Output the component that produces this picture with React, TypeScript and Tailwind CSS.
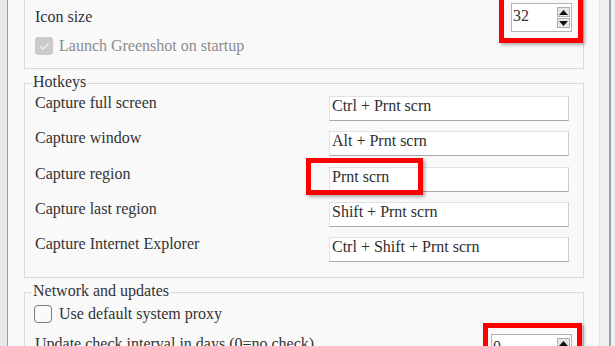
import React from "react";

function Arrow({ up }: { up?: boolean }) {
  return (
    <svg width="9" height="5" viewBox="0 0 9 5" className="block">
      {up ? <polygon points="0,5 9,5 4.5,0" fill="#111" /> : <polygon points="0,0 9,0 4.5,5" fill="#111" />}
    </svg>
  );
}

function Spinner({ value, width }: { value: string; width: string }) {
  return (
    <div className={`${width} h-[29px] bg-white border border-[#b4b4b4] flex justify-between pr-[1px]`}>
      <span className="pl-[1px] pt-[3px] leading-[18px] text-[#3a3228]">{value}</span>
      <div className="flex flex-col gap-px pt-[3px]">
        <div className="w-[13px] h-[10px] border border-[#adadad] bg-[#e6e6e6] flex items-center justify-center">
          <Arrow up />
        </div>
        <div className="w-[13px] h-[10px] border border-[#adadad] bg-[#e6e6e6] flex items-center justify-center">
          <Arrow />
        </div>
      </div>
    </div>
  );
}

function TextBox({ value, children }: { value: string; children?: React.ReactNode }) {
  return (
    <div className="relative w-[240px] h-[25px] bg-white border border-[#e2e2e2] border-b-[#a9a9a9] border-r-[#cfcfcf] pl-[2px] leading-[18px] text-[#2f2f2f]">
      {value}
      {children}
    </div>
  );
}

const hotkeys: [string, string, boolean][] = [
  ["Capture full screen", "Ctrl + Prnt scrn", false],
  ["Capture window", "Alt + Prnt scrn", false],
  ["Capture region", "Prnt scrn", true],
  ["Capture last region", "Shift + Prnt scrn", false],
  ["Capture Internet Explorer", "Ctrl + Shift + Prnt scrn", false],
];

export default function App() {
  return (
    <div className="w-[615px] h-[346px] overflow-hidden flex bg-[#eceeef] text-[16px] leading-[20px] text-[#333] font-[family-name:'Liberation_Serif','Times_New_Roman',serif]">
      <div className="w-[7px] shrink-0 bg-[#e7e9ea]" />
      <div className="w-px shrink-0 bg-[#93a4b0]" />
      <div className="w-[591px] shrink-0 bg-[#f9f9f9] pl-[16px] pr-[15px] flex flex-col">
        {/* General group (top cut off) */}
        <div className="border-x border-b border-[#dadada] pl-[10px] pr-[11px] pb-[12px] flex flex-col">
          <div className="flex justify-between items-start pt-[3px]">
            <span className="mt-[4px]">Icon size</span>
            <div className="relative">
              <Spinner value="32" width="w-[61px]" />
              <div className="absolute left-[-12px] right-[-11px] top-[-20px] bottom-[-11px] border-[5px] border-[#ff0000] shadow-[2px_2px_3px_rgba(0,0,0,0.3)]" />
            </div>
          </div>
          <div className="flex items-center gap-[6px] h-[20px] mt-[4px]">
            <div className="w-[18px] h-[18px] rounded-[3px] bg-[#cbcbcb] flex items-center justify-center">
              <svg width="11" height="9" viewBox="0 0 11 9">
                <polyline points="1.5,4.5 4.2,7 9.5,1.5" fill="none" stroke="#f2f2f2" strokeWidth="1.4" />
              </svg>
            </div>
            <span className="text-[#8c8c8c]">Launch Greenshot on startup</span>
          </div>
        </div>

        {/* Hotkeys */}
        <fieldset className="mt-[3px] border border-[#dadada] pl-[10px] pr-[14px] pb-[15px] pt-[1px]">
          <legend className="ml-[-3px] px-[1px] pb-[3px] leading-[20px]">Hotkeys</legend>
          <div className="flex flex-col gap-[10.25px]">
            {hotkeys.map(([label, value, marked]) => (
              <div key={label} className="flex justify-between items-start h-[25px]">
                <span className="mt-[-3px]">{label}</span>
                <TextBox value={value}>
                  {marked && (
                    <div className="absolute left-[-24px] top-[-10px] w-[117px] h-[37px] border-[5px] border-[#ff0000] shadow-[2px_2px_3px_rgba(0,0,0,0.3)]" />
                  )}
                </TextBox>
              </div>
            ))}
          </div>
        </fieldset>

        {/* Network and updates */}
        <fieldset className="mt-[3px] border border-[#dadada] pl-[10px] pr-[11px] pb-[12px] pt-0">
          <legend className="ml-[-3px] px-[1px] pb-[3px] leading-[20px]">Network and updates</legend>
          <div className="flex items-center gap-[7px] h-[20px] ml-[-1px]">
            <div className="w-[18px] h-[18px] rounded-[4px] border-[1.5px] border-[#7a7a7a] bg-[#fafafa]" />
            <span>Use default system proxy</span>
          </div>
          <div className="flex justify-between items-start mt-[10px]">
            <span>Update check interval in days (0=no check)</span>
            <div className="relative">
              <Spinner value="0" width="w-[81px]" />
              <div className="absolute left-[-8px] right-[-10px] top-[-11px] bottom-[-11px] border-[5px] border-[#ff0000] shadow-[2px_2px_3px_rgba(0,0,0,0.3)]" />
            </div>
          </div>
        </fieldset>
      </div>
      <div className="w-px shrink-0 bg-[#e2e2e2]" />
      <div className="w-[9px] shrink-0 bg-[#f0f0f0]" />
      <div className="w-[2px] shrink-0 bg-[#93a4b0]" />
      <div className="flex-1 bg-[#eceeef]" />
    </div>
  );
}
